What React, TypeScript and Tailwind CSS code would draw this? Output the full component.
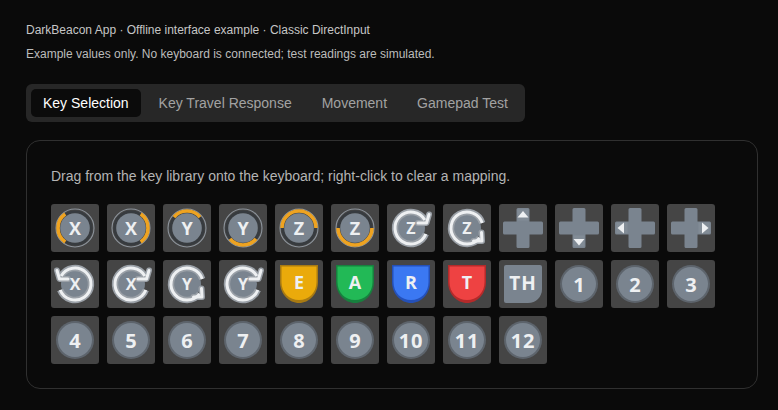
const RING = "#8d949c";
const TRACK = "#373b3f";
const DISC = "#7a848f";
const HALO = "#9aa0a7";
const WHITE = "#eef0f2";
const AMBER = "#eea321";

const labelFont = { fontFamily: "'Open Sans', 'Noto Sans', sans-serif", fontWeight: 700 };

function polar(r: number, deg: number) {
  const a = ((deg - 90) * Math.PI) / 180;
  return [24 + r * Math.cos(a), 24 + r * Math.sin(a)];
}

function arc(r: number, from: number, to: number) {
  const [x1, y1] = polar(r, from);
  const [x2, y2] = polar(r, to);
  const large = (to - from + 360) % 360 > 180 ? 1 : 0;
  return `M${x1} ${y1}A${r} ${r} 0 ${large} 1 ${x2} ${y2}`;
}

function Label({
  text,
  size = 17,
  y = 24.5,
  spacing = 0,
}: {
  text: string;
  size?: number;
  y?: number;
  spacing?: number;
}) {
  return (
    <text
      x={24}
      y={y}
      dy="0.36em"
      textAnchor="middle"
      fontSize={size}
      fill={WHITE}
      letterSpacing={spacing}
      style={labelFont}
    >
      {text}
    </text>
  );
}

function Press({ label, from, to }: { label: string; from: number; to: number }) {
  return (
    <>
      <circle cx={24} cy={24} r={19} fill="none" stroke={RING} strokeWidth={1.1} />
      <circle cx={24} cy={24} r={16.2} fill="none" stroke={TRACK} strokeWidth={2.8} />
      <circle cx={24} cy={24} r={14.8} fill={DISC} />
      <path d={arc(17, from, to)} fill="none" stroke={AMBER} strokeWidth={3.6} />
      <Label text={label} size={18} />
    </>
  );
}

// arrow: upper right, lower right, or upper left (mirrored upper right)
function Spin({ label, arrow }: { label: string; arrow: "ur" | "lr" | "ul" }) {
  const lower = arrow === "lr";
  const line = lower ? arc(16, 128, 72) : arc(16, 112, 60);
  const head = lower ? "M30.5 37h8.5l-.5-8.5" : "M42 10.5l-2.5 8.5h-8.5";
  return (
    <>
      <circle cx={24} cy={24} r={14} fill={DISC} />
      <g transform={arrow === "ul" ? "matrix(-1 0 0 1 48 0)" : undefined}>
        <path d={line} fill="none" stroke={HALO} strokeWidth={6.4} />
        <path d={head} fill="none" stroke={HALO} strokeWidth={6} strokeLinecap="round" strokeLinejoin="round" />
        <path d={line} fill="none" stroke={WHITE} strokeWidth={3} />
        <path d={head} fill="none" stroke={WHITE} strokeWidth={3} strokeLinecap="round" strokeLinejoin="round" />
      </g>
      <Label text={label} size={16} />
    </>
  );
}

function Dpad({ dir }: { dir: "up" | "down" | "left" | "right" }) {
  const tip = {
    up: "M18.5 5.500h11v11h-11z",
    down: "M18.5 31.500h11v11h-11z",
    left: "M5.500 18.500h11v11h-11z",
    right: "M31.500 18.500h11v11h-11z",
  }[dir];
  const tri = {
    up: "M24 7l5.500 6.500h-11z",
    down: "M24 41.500l-5.500-6.500h11z",
    left: "M6.500 24l6.500-5.500v11z",
    right: "M41.500 24l-6.500 5.500v-11z",
  }[dir];
  return (
    <>
      <path
        d="M19 4h10a1.500 1.500 0 0 1 1.500 1.500v12h12a1.500 1.500 0 0 1 1.500 1.500v10a1.500 1.500 0 0 1-1.500 1.500h-12v12A1.500 1.500 0 0 1 29 44H19a1.500 1.500 0 0 1-1.500-1.500v-12h-12A1.500 1.500 0 0 1 4 29V19a1.500 1.500 0 0 1 1.500-1.500h12v-12A1.500 1.500 0 0 1 19 4z"
        fill={DISC}
      />
      <path d={tip} fill="#828c96" />
      <path d={tri} fill={WHITE} />
    </>
  );
}

function Shield({ label, fill, edge }: { label: string; fill: string; edge: string }) {
  return (
    <>
      <path d="M5 5h38v17c0 12-9 21-19 21S5 34 5 22z" fill={edge} />
      <path d="M6.500 6.500h35V22c0 11-8 18-17.500 18S6.500 33 6.500 22z" fill={fill} />
      <Label text={label} size={18} y={23} />
    </>
  );
}

function Num({ label }: { label: string }) {
  return (
    <>
      <circle cx={24} cy={24} r={19} fill="#5d646c" />
      <circle cx={24} cy={24} r={17} fill={DISC} />
      <Label text={label} size={20} spacing={label.length > 1 ? 0.8 : 0} />
    </>
  );
}

function Key({ children }: { children: React.ReactNode }) {
  return (
    <div className="h-12 w-12 rounded-[3px] bg-[#454545]">
      <svg width={48} height={48} viewBox="0 0 48 48" className="block">
        {children}
      </svg>
    </div>
  );
}

const tabs = ["Key Selection", "Key Travel Response", "Movement", "Gamepad Test"];

export default function App() {
  return (
    <div className="h-[410px] w-[778px] overflow-hidden bg-[#0a0a0a] pl-[26px] pr-5 pt-5 font-['Liberation_Sans',Arial,sans-serif]">
      <p className="text-xs leading-5 text-[#c6c6c6]">DarkBeacon App · Offline interface example · Classic DirectInput</p>
      <p className="mt-1 text-xs leading-5 text-[#bcbcbc]">
        Example values only. No keyboard is connected; test readings are simulated.
      </p>

      <div className="mt-5 flex w-fit gap-1.5 rounded-md bg-[#272727] p-[5px]">
        {tabs.map((t, i) => (
          <div
            key={t}
            className={`rounded-[5px] px-3 py-1 text-sm leading-5 ${
              i === 0 ? "bg-[#0b0b0b] text-white" : "text-[#a2a2a2]"
            }`}
          >
            {t}
          </div>
        ))}
      </div>

      <div className="mt-[18px] rounded-[14px] border border-[#303030] px-6 pb-6 pt-[25px]">
        <p className="text-sm leading-5 text-[#b4b4b4]">
          Drag from the key library onto the keyboard; right-click to clear a mapping.
        </p>
        <div className="mt-[18px] grid grid-cols-[repeat(12,48px)] gap-2">
          <Key><Press label="X" from={215} to={325} /></Key>
          <Key><Press label="X" from={35} to={145} /></Key>
          <Key><Press label="Y" from={-50} to={50} /></Key>
          <Key><Press label="Y" from={130} to={230} /></Key>
          <Key><Press label="Z" from={-90} to={90} /></Key>
          <Key><Press label="Z" from={90} to={270} /></Key>
          <Key><Spin label="Z" arrow="ur" /></Key>
          <Key><Spin label="Z" arrow="lr" /></Key>
          <Key><Dpad dir="up" /></Key>
          <Key><Dpad dir="down" /></Key>
          <Key><Dpad dir="left" /></Key>
          <Key><Dpad dir="right" /></Key>

          <Key><Spin label="X" arrow="ul" /></Key>
          <Key><Spin label="X" arrow="ur" /></Key>
          <Key><Spin label="Y" arrow="lr" /></Key>
          <Key><Spin label="Y" arrow="ur" /></Key>
          <Key><Shield label="E" fill="#eaaa0b" edge="#a87a12" /></Key>
          <Key><Shield label="A" fill="#22b956" edge="#17803e" /></Key>
          <Key><Shield label="R" fill="#3b78f2" edge="#2450b8" /></Key>
          <Key><Shield label="T" fill="#ee4242" edge="#b42a2a" /></Key>
          <Key>
            <path d="M5 7a2 2 0 0 1 2-2h34a2 2 0 0 1 2 2v22c0 8-6 14-14 14H7a2 2 0 0 1-2-2z" fill={DISC} />
            <Label text="TH" size={19} y={23} spacing={1} />
          </Key>
          <Key><Num label="1" /></Key>
          <Key><Num label="2" /></Key>
          <Key><Num label="3" /></Key>

          {["4", "5", "6", "7", "8", "9", "10", "11", "12"].map((n) => (
            <Key key={n}><Num label={n} /></Key>
          ))}
        </div>
      </div>
    </div>
  );
}
